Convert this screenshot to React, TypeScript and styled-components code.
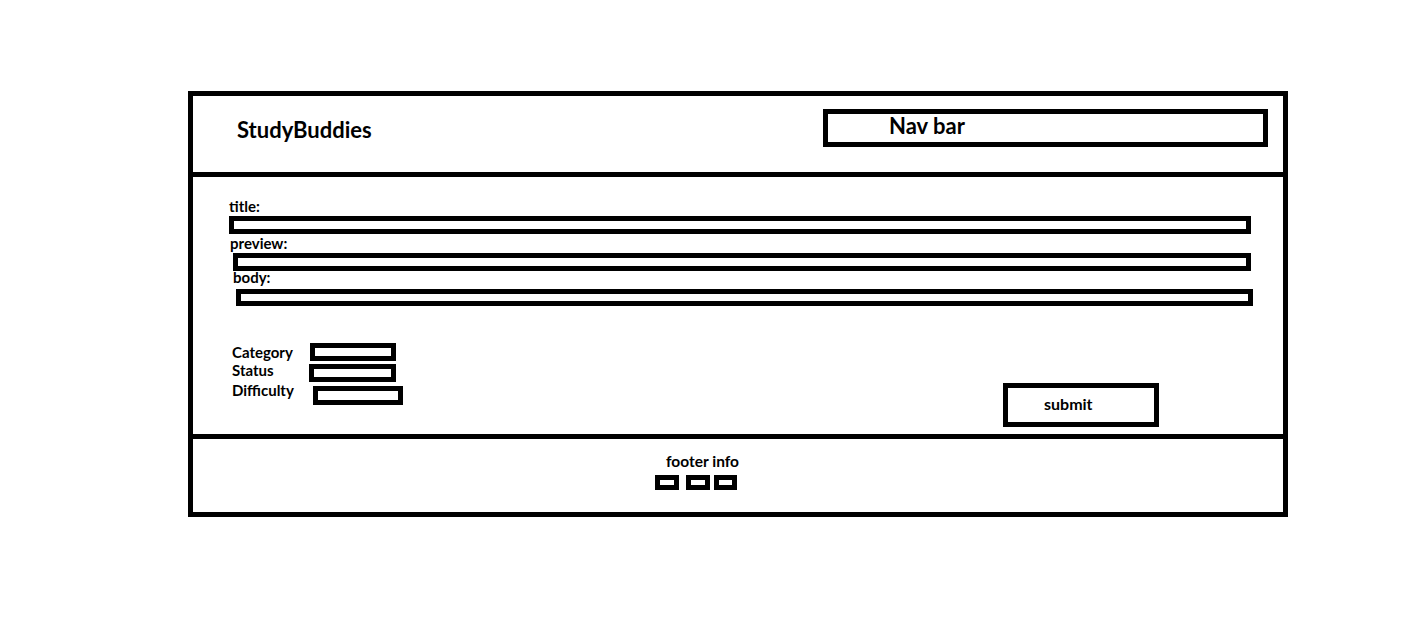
import React from "react";
import styled, { createGlobalStyle } from "styled-components";

const GlobalStyle = createGlobalStyle`
  *, *::before, *::after { box-sizing: border-box; }
  html, body { margin: 0; padding: 0; background: #fff; }
  body { font-family: "Lato", "Liberation Sans", sans-serif; color: #000; }
`;

const Page = styled.div`
  padding: 91px 0 0 188px;
  width: 1428px;
  height: 627px;
`;

const Frame = styled.div`
  width: 1100px;
  border: 5px solid #000;
  display: flex;
  flex-direction: column;
`;

const Header = styled.header`
  height: 81px;
  border-bottom: 5px solid #000;
  display: flex;
  align-items: flex-start;
  padding-left: 44px;
`;

const Logo = styled.div`
  margin-top: 22px;
  font-size: 22px;
  line-height: 24px;
  font-weight: 700;
`;

const NavBox = styled.nav`
  margin: 13px 15px 0 auto;
  width: 445px;
  height: 38px;
  border: 5px solid #000;
  padding-left: 61px;
  font-size: 22px;
  line-height: 24px;
  font-weight: 700;
`;

const Form = styled.form`
  height: 257px;
  padding: 22px 0 0 36px;
  display: flex;
  flex-direction: column;
`;

const Label = styled.label<{ $indent?: number; $top?: number }>`
  display: block;
  margin-left: ${(p) => p.$indent ?? 0}px;
  margin-top: ${(p) => p.$top ?? 0}px;
  font-size: 15px;
  line-height: 14px;
  font-weight: 700;
`;

const TextBox = styled.div<{ $indent: number; $width: number; $top: number; $height?: number }>`
  margin-left: ${(p) => p.$indent}px;
  margin-top: ${(p) => p.$top}px;
  width: ${(p) => p.$width}px;
  height: ${(p) => p.$height ?? 18}px;
  border: 5px solid #000;
`;

const BottomRow = styled.div`
  margin-top: 37px;
  display: flex;
  align-items: flex-start;
`;

const SelectGroup = styled.div`
  margin-left: 3px;
  display: flex;
  flex-direction: column;
`;

const SelectRow = styled.div<{ $top: number }>`
  display: flex;
  align-items: flex-start;
  margin-top: ${(p) => p.$top}px;
`;

const SelectLabel = styled.span<{ $lift: number }>`
  width: 78px;
  margin-top: ${(p) => p.$lift}px;
  font-size: 15px;
  line-height: 14px;
  font-weight: 700;
`;

const SelectBox = styled.div<{ $shift: number; $width: number; $height?: number }>`
  margin-left: ${(p) => p.$shift}px;
  width: ${(p) => p.$width}px;
  height: ${(p) => p.$height ?? 18}px;
  border: 5px solid #000;
`;

const Submit = styled.button`
  margin: 40px 124px 0 auto;
  width: 156px;
  height: 44px;
  border: 5px solid #000;
  background: #fff;
  display: flex;
  align-items: center;
  padding: 0 0 2px 36px;
  font-family: "Lato", "Liberation Sans", sans-serif;
  font-size: 16px;
  line-height: 16px;
  font-weight: 700;
  color: #000;
`;

const Footer = styled.footer`
  height: 78px;
  border-top: 5px solid #000;
  padding: 14px 0 0 462px;
  display: flex;
  flex-direction: column;
`;

const FooterText = styled.div`
  margin-left: 11px;
  font-size: 15.5px;
  line-height: 16px;
  font-weight: 700;
`;

const FooterLinks = styled.div`
  margin-top: 6px;
  display: flex;
`;

const FooterLink = styled.span<{ $gap: number; $width?: number }>`
  margin-left: ${(p) => p.$gap}px;
  width: ${(p) => p.$width ?? 24}px;
  height: 15px;
  border: 5px solid #000;
`;

export default function App() {
  return (
    <>
      <GlobalStyle />
      <Page>
        <Frame>
          <Header>
            <Logo>StudyBuddies</Logo>
            <NavBox>Nav bar</NavBox>
          </Header>
          <Form onSubmit={(e) => e.preventDefault()}>
            <Label>title:</Label>
            <TextBox $indent={0} $width={1022} $top={3} />
            <Label $indent={1} $top={2}>preview:</Label>
            <TextBox $indent={4} $width={1018} $top={3} />
            <Label $indent={4} $top={-1}>body:</Label>
            <TextBox $indent={7} $width={1017} $top={5} $height={17} />
            <BottomRow>
              <SelectGroup>
                <SelectRow $top={0}>
                  <SelectLabel $lift={2}>Category</SelectLabel>
                  <SelectBox $shift={0} $width={86} />
                </SelectRow>
                <SelectRow $top={3}>
                  <SelectLabel $lift={-1}>Status</SelectLabel>
                  <SelectBox $shift={-1} $width={87} />
                </SelectRow>
                <SelectRow $top={4}>
                  <SelectLabel $lift={-3}>Difficulty</SelectLabel>
                  <SelectBox $shift={3} $width={90} $height={19} />
                </SelectRow>
              </SelectGroup>
              <Submit type="submit">submit</Submit>
            </BottomRow>
          </Form>
          <Footer>
            <FooterText>footer info</FooterText>
            <FooterLinks>
              <FooterLink $gap={0} />
              <FooterLink $gap={7} />
              <FooterLink $gap={4} $width={23} />
            </FooterLinks>
          </Footer>
        </Frame>
      </Page>
    </>
  );
}
